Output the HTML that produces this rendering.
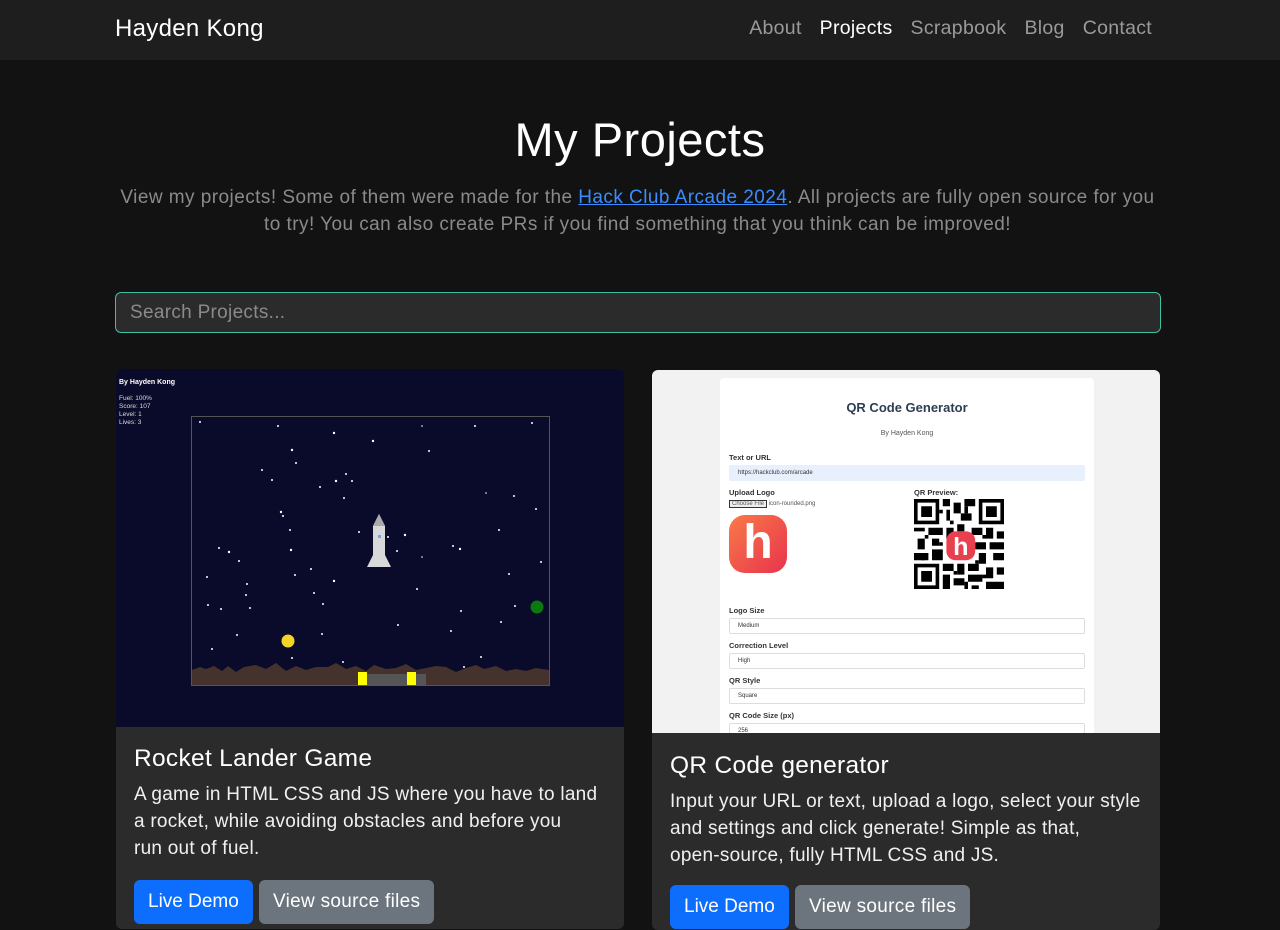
<!DOCTYPE html>
<html><head><meta charset="utf-8"><style>
*{box-sizing:border-box;margin:0;padding:0}
html,body{width:1280px;height:909px;overflow:hidden}
body{background:#121212;font-family:"Liberation Sans",sans-serif;color:#fff}
.nav{height:60px;background:#1e1e1e;position:relative}
.brand{position:absolute;left:115px;top:15px;font-size:24px;color:#fff;letter-spacing:0.3px}
.links{position:absolute;right:128px;top:17px;font-size:19.5px;color:#9a9a9a;letter-spacing:0.3px}
.links span{margin-left:18px}
.links .a{color:#fff}
h1{position:absolute;top:112px;width:100%;text-align:center;font-size:47px;font-weight:normal;letter-spacing:0.5px}
.sub{position:absolute;top:184px;left:115px;width:1045px;text-align:center;font-size:19px;line-height:27px;color:#8a8a8a;letter-spacing:0.45px}
.sub a{color:#3b8cff;text-decoration:underline}
.search{position:absolute;left:115px;top:292px;width:1046px;height:41px;border:1px solid #3fc0a0;border-radius:6px;background:#2b2b2b;color:#8a8a8a;font-size:19px;padding:9px 14px;letter-spacing:0.3px}
.card{position:absolute;top:369px;width:509px;height:560px;background:#2b2b2b;border-radius:6px;overflow:hidden}
.card h2{position:absolute;left:18px;font-size:24.5px;font-weight:normal;letter-spacing:0.3px}
.card p{position:absolute;left:18px;width:490px;font-size:19px;line-height:27px;color:#f0f0f0;letter-spacing:0.25px;white-space:nowrap}
.btn{position:absolute;height:44px;border-radius:6px;font-size:19px;padding:11px 14px;color:#fff}
.b1{background:#0d6efd}.b2{background:#6c757d;letter-spacing:0.3px}
.qr{position:absolute;left:68px;top:8px;width:374px;height:360px;background:#fff;border-radius:4px;color:#333;font-size:7px}
.qr .l{position:absolute;left:9px;font-weight:bold;font-size:7.5px}
.qr .f{position:absolute;left:9px;width:356px;height:16px;border:1px solid #ddd;border-radius:2px;font-size:6px;padding:4px 8px}
</style></head><body>
<div class="nav"><div class="brand">Hayden Kong</div>
<div class="links"><span>About</span><span class="a">Projects</span><span>Scrapbook</span><span>Blog</span><span>Contact</span></div></div>
<h1>My Projects</h1>
<div class="sub">View my projects! Some of them were made for the <a>Hack Club Arcade 2024</a>. All projects are fully open source for you to try! You can also create PRs if you find something that you think can be improved!</div>
<div class="search">Search Projects...</div>

<div class="card" style="left:116px;width:508px">
<svg width="508" height="358" style="position:absolute;left:0;top:0;background:#0a0a2a">
<text x="3" y="15" fill="#fff" font-size="7" font-weight="bold" font-family="Liberation Sans">By Hayden Kong</text>
<text x="3" y="31" fill="#ddd" font-size="6.5" font-family="Liberation Sans">Fuel: 100%</text>
<text x="3" y="39" fill="#ddd" font-size="6.5" font-family="Liberation Sans">Score: 107</text>
<text x="3" y="47" fill="#ddd" font-size="6.5" font-family="Liberation Sans">Level: 1</text>
<text x="3" y="55" fill="#ddd" font-size="6.5" font-family="Liberation Sans">Lives: 3</text>
<rect x="75.5" y="47.5" width="358" height="269" fill="#0a0a2a" stroke="#555"/>
<g fill="#fff">
<circle cx="84" cy="53" r="1"/><circle cx="162" cy="57" r="1"/><circle cx="218" cy="64" r="1.2"/><circle cx="257" cy="72" r="1.2"/><circle cx="359" cy="57" r="1"/><circle cx="306" cy="57" r="0.8"/><circle cx="416" cy="54" r="1"/>
<circle cx="176" cy="81" r="1.2"/><circle cx="180" cy="94" r="1"/><circle cx="146" cy="101" r="1"/><circle cx="156" cy="111" r="1"/><circle cx="220" cy="112" r="1.2"/><circle cx="236" cy="112" r="1"/><circle cx="204" cy="118" r="1"/><circle cx="230" cy="105" r="1"/>
<circle cx="313" cy="82" r="1"/><circle cx="370" cy="124" r="0.8"/><circle cx="398" cy="127" r="1"/><circle cx="420" cy="140" r="1"/><circle cx="228" cy="129" r="1"/><circle cx="165" cy="143" r="1.2"/><circle cx="167" cy="147" r="1"/><circle cx="174" cy="161" r="1"/>
<circle cx="243" cy="163" r="1"/><circle cx="272" cy="168" r="1"/><circle cx="289" cy="166" r="1.2"/><circle cx="281" cy="182" r="1"/><circle cx="337" cy="177" r="1"/><circle cx="383" cy="161" r="1"/><circle cx="344" cy="180" r="1.2"/><circle cx="306" cy="188" r="0.8"/>
<circle cx="103" cy="179" r="1"/><circle cx="113" cy="183" r="1.2"/><circle cx="123" cy="192" r="1"/><circle cx="175" cy="181" r="1.2"/><circle cx="195" cy="200" r="1"/><circle cx="179" cy="206" r="1"/><circle cx="218" cy="212" r="1.2"/><circle cx="91" cy="208" r="1"/>
<circle cx="131" cy="215" r="1"/><circle cx="130" cy="226" r="1"/><circle cx="92" cy="236" r="1"/><circle cx="105" cy="240" r="1"/><circle cx="134" cy="239" r="1"/><circle cx="198" cy="224" r="1"/><circle cx="207" cy="235" r="1"/><circle cx="301" cy="220" r="1"/>
<circle cx="345" cy="242" r="1"/><circle cx="425" cy="193" r="1"/><circle cx="393" cy="205" r="1"/><circle cx="399" cy="237" r="1"/><circle cx="385" cy="253" r="1"/><circle cx="335" cy="262" r="1"/><circle cx="282" cy="256" r="1"/><circle cx="206" cy="265" r="1"/><circle cx="121" cy="266" r="1"/><circle cx="96" cy="280" r="1"/><circle cx="176" cy="289" r="1"/><circle cx="365" cy="288" r="1"/><circle cx="348" cy="298" r="1"/><circle cx="227" cy="293" r="1"/>
</g>
<circle cx="172" cy="272" r="6.5" fill="#f5d327"/>
<circle cx="421" cy="238" r="6.5" fill="#0a7a10"/>
<path d="M76 301 L84 298 L90 300 L98 297 L106 302 L112 297 L120 303 L128 298 L140 296 L150 300 L160 294 L170 302 L180 297 L190 301 L200 298 L212 298 L220 294 L230 300 L240 297 L250 302 L258 296 L270 300 L280 299 L290 295 L300 301 L310 299 L320 297 L330 298 L340 303 L350 299 L360 296 L368 300 L380 297 L390 302 L400 300 L410 302 L420 299 L433 301 L433 316 L76 316Z" fill="#45322c"/>
<rect x="244" y="305" width="66" height="11" fill="#555"/>
<rect x="242" y="303" width="9" height="13" fill="#ff0"/><rect x="291" y="303" width="9" height="13" fill="#ff0"/>
<path d="M263 145 L269 157 L269 186 L275 198 L251 198 L257 186 L257 157Z" fill="#d8d8d8"/>
<path d="M263 145 L269 157 L257 157Z" fill="#aaa"/>
<rect x="262" y="166" width="3" height="3" fill="#6af"/>
</svg>
<h2 style="top:376px">Rocket Lander Game</h2>
<p style="top:412px">A game in HTML CSS and JS where you have to land<br>a rocket, while avoiding obstacles and before you<br>run out of fuel.</p>
<div class="btn b1" style="left:18px;top:511px">Live Demo</div>
<div class="btn b2" style="left:143px;top:511px">View source files</div>
</div>

<div class="card" style="left:652px;top:370px;width:508px">
<div style="position:absolute;left:0;top:0;width:508px;height:363px;background:#f2f2f2;overflow:hidden">
<div class="qr">
<div style="position:absolute;top:22px;width:100%;text-align:center;font-size:13px;font-weight:bold;color:#2c3e50">QR Code Generator</div>
<div style="position:absolute;top:52px;width:100%;text-align:center;font-size:7px;color:#555">By Hayden Kong</div>
<div class="l" style="top:75px">Text or URL</div>
<div class="f" style="top:87px;background:#e8f0fe;border-color:#e8f0fe">https://hackclub.com/arcade</div>
<div class="l" style="top:110px">Upload Logo</div>
<div style="position:absolute;left:9px;top:123px;font-size:6px;color:#555"><span style="border:1px solid #333;background:#eee;padding:0 2px">Choose File</span> icon-rounded.png</div>
<div style="position:absolute;left:9px;top:137px;width:58px;height:58px;border-radius:16px;background:linear-gradient(135deg,#f97a48,#e8334e);color:#fff;font-size:48px;font-weight:bold;text-align:center;line-height:56px">h</div>
<div class="l" style="left:194px;top:110px">QR Preview:</div>
<svg style="position:absolute;left:194px;top:121px" width="90" height="90" viewBox="0 0 25 25"><rect width="25" height="25" fill="#fff"/>
<g fill="#000"><path d="M0 0h7v7H0zM18 0h7v7h-7zM0 18h7v7H0z"/></g>
<g fill="#fff"><path d="M1 1h5v5H1zM19 1h5v5h-5zM1 19h5v5H1z"/></g>
<g fill="#000"><path d="M2 2h3v3H2zM20 2h3v3h-3zM2 20h3v3H2z"/>
<path d="M8 0h2v2H8zM11 1h2v3h-2zM14 0h3v2h-3zM9 3h1v3H9zM13 4h3v2h-3zM0 8h3v1H0zM4 8h4v2H4zM9 8h2v3H9zM12 7h2v2h-2zM16 8h3v2h-3zM20 8h2v3h-2zM23 9h2v2h-2zM1 11h2v3H1zM5 11h2v2H5zM0 15h4v2H0zM5 14h3v3H5zM17 12h3v2h-3zM21 12h4v2h-4zM18 15h2v3h-2zM22 15h3v2h-3zM8 18h3v2H8zM12 18h2v3h-2zM15 18h3v2h-3zM20 19h2v3h-2zM23 19h2v2h-2zM8 21h2v4H8zM11 22h3v2h-3zM15 21h4v2h-4zM20 23h5v2h-5zM16 24h2v1h-2z"/>
<path d="M7 3h1v1H7zM10 6h1v1h-1zM14 2h1v2h-1zM3 10h1v1H3zM7 12h1v1H7zM2 16h1v1H2zM19 10h1v1h-1zM15 10h1v2h-1zM17 17h1v1h-1zM11 20h1v1h-1zM19 21h1v1h-1zM14 23h1v2h-1z"/></g>
<rect x="9" y="9" width="8" height="8" rx="2.5" fill="#e8404f"/><text x="13" y="15.5" font-size="7" font-weight="bold" fill="#fff" text-anchor="middle" font-family="Liberation Sans">h</text>
</svg>
<div class="l" style="top:228px">Logo Size</div>
<div class="f" style="top:240px">Medium</div>
<div class="l" style="top:263px">Correction Level</div>
<div class="f" style="top:275px">High</div>
<div class="l" style="top:298px">QR Style</div>
<div class="f" style="top:310px">Square</div>
<div class="l" style="top:333px">QR Code Size (px)</div>
<div class="f" style="top:345px">256</div>
</div></div>
<h2 style="top:382px">QR Code generator</h2>
<p style="top:418px">Input your URL or text, upload a logo, select your style<br>and settings and click generate! Simple as that,<br>open-source, fully HTML CSS and JS.</p>
<div class="btn b1" style="left:18px;top:515px">Live Demo</div>
<div class="btn b2" style="left:143px;top:515px">View source files</div>
</div>
</body></html>
